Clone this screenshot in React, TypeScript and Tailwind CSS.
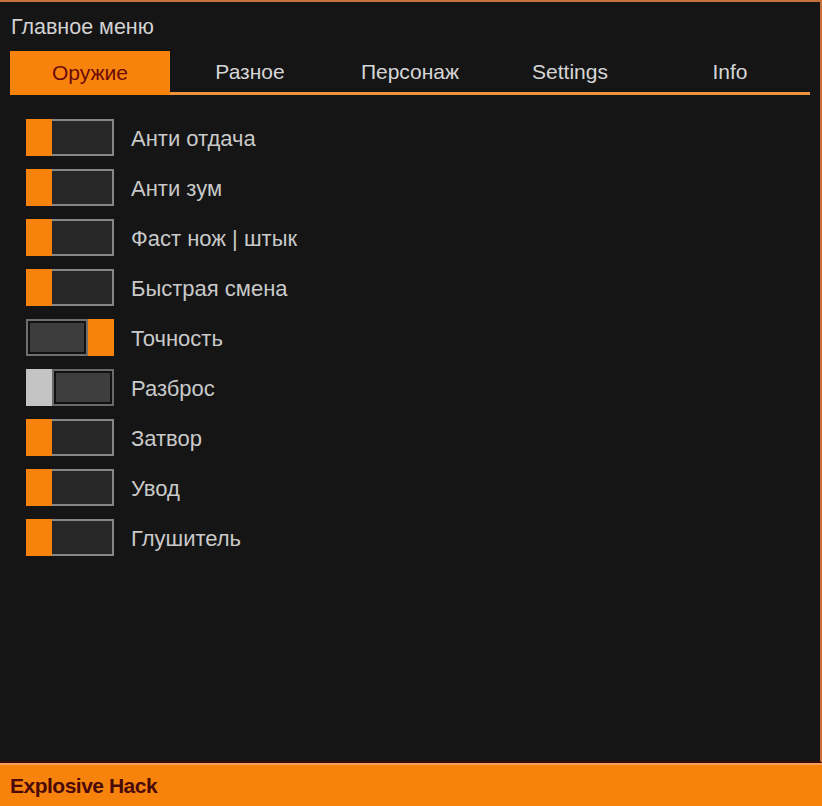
import React from "react";

const TABS = ["Оружие", "Разное", "Персонаж", "Settings", "Info"];

type Mode = "off" | "on" | "disabled";

const ITEMS: { label: string; mode: Mode }[] = [
  { label: "Анти отдача", mode: "off" },
  { label: "Анти зум", mode: "off" },
  { label: "Фаст нож | штык", mode: "off" },
  { label: "Быстрая смена", mode: "off" },
  { label: "Точность", mode: "on" },
  { label: "Разброс", mode: "disabled" },
  { label: "Затвор", mode: "off" },
  { label: "Увод", mode: "off" },
  { label: "Глушитель", mode: "off" },
];

function Toggle({ mode }: { mode: Mode }) {
  if (mode === "on") {
    return (
      <div className="flex h-[37px] w-[88px]">
        <div className="flex-1 border-2 border-[#6e6e6e] bg-[#111] p-[2px]">
          <div className="h-full w-full bg-[#3d3d3d]" />
        </div>
        <div className="w-[26px] bg-[#f7830c]" />
      </div>
    );
  }
  if (mode === "disabled") {
    return (
      <div className="flex h-[37px] w-[88px]">
        <div className="w-[26px] bg-[#c4c4c4]" />
        <div className="flex-1 border-2 border-[#6a6a6a] bg-[#111] p-[2px]">
          <div className="h-full w-full bg-[#3e3e3e]" />
        </div>
      </div>
    );
  }
  return (
    <div className="flex h-[37px] w-[88px]">
      <div className="w-[26px] bg-[#f7830c]" />
      <div className="flex-1 border-2 border-l-0 border-[#868686] bg-[#272727]" />
    </div>
  );
}

export default function App() {
  return (
    <div
      className="flex h-[806px] w-[822px] flex-col bg-[#151515]"
      style={{ fontFamily: '"Liberation Sans", Arial, sans-serif' }}
    >
      {/* Main panel */}
      <div className="flex flex-1 flex-col border-t-2 border-r-2 border-b-2 border-t-[#c8703a] border-r-[#c8703a] border-b-[#3a0c06]">
        <div className="px-[11px] pt-[13px] text-[21.5px] leading-[24px] text-[#d2d2d2]">
          Главное меню
        </div>

        {/* Tabs */}
        <div className="mx-[10px] mt-[12px] flex border-b-[3px] border-[#f0923a]">
          {TABS.map((t, i) => (
            <div
              key={t}
              className={`flex h-[41px] w-[160px] items-center justify-center text-[21px] ${
                i === 0 ? "-mb-[3px] h-[44px] bg-[#f7830c] text-[#6a0a0a]" : "text-[#d6d6d6]"
              }`}
            >
              {t}
            </div>
          ))}
        </div>

        {/* Toggles */}
        <div className="mt-[24px] flex flex-col gap-[13px] pl-[26px]">
          {ITEMS.map((it) => (
            <div key={it.label} className="flex items-center gap-[17px]">
              <Toggle mode={it.mode} />
              <span className="pt-[2px] text-[22px] text-[#c9c9c9]">{it.label}</span>
            </div>
          ))}
        </div>
      </div>

      {/* Footer */}
      <div className="flex h-[43px] items-center border-t-2 border-[#f3a060] bg-[#f7830c] px-[10px]">
        <span
          className="text-[21px] font-bold tracking-[-0.5px] text-[#4a0a0a]"
          style={{ fontFamily: '"Liberation Sans Narrow", "Liberation Sans", Arial, sans-serif' }}
        >
          Explosive Hack
        </span>
      </div>
    </div>
  );
}
